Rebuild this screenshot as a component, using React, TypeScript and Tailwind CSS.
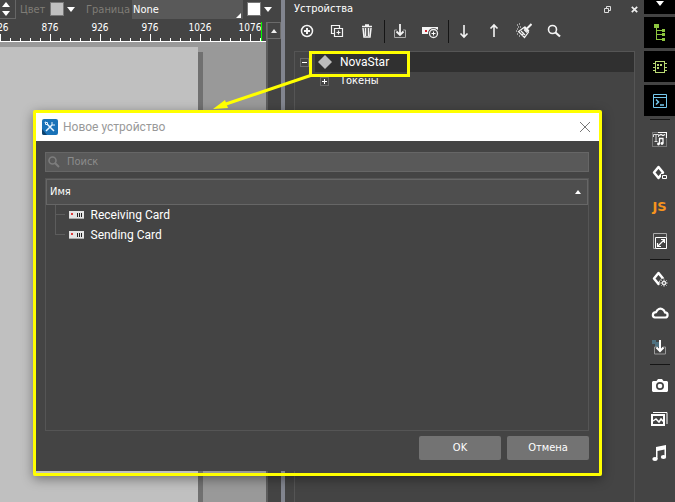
import React, { useState } from 'react';

const rulerMarks = ['826', '876', '926', '976', '1026', '1076'];
const deviceTypes = ['Receiving Card', 'Sending Card'];

const Caret: React.FC<{ up?: boolean }> = ({ up }) => (
  <svg width="8" height="5" viewBox="0 0 8 5" fill="#fff">
    <path d={up ? 'M0 5L4 0l4 5z' : 'M0 0h8L4 5z'} />
  </svg>
);

const Expander: React.FC<{ open?: boolean }> = ({ open }) => (
  <svg width="9" height="9" viewBox="0 0 9 9" fill="none" shapeRendering="crispEdges">
    <path d="M.5.5h8v8h-8z" stroke="#6a6a6a" />
    <path d={open ? 'M2 4.5h5' : 'M2 4.5h5M4.5 2v5'} stroke="#fff" />
  </svg>
);

const Icon: React.FC<{ children: React.ReactNode; size?: number }> = ({ children, size = 16 }) => (
  <svg width={size} height={size} viewBox="0 0 16 16" fill="none" stroke="#f4f4f4" strokeWidth="1.5">
    {children}
  </svg>
);

const ToolButton: React.FC<{ label: string; children: React.ReactNode }> = ({ label, children }) => (
  <button type="button" aria-label={label} className="flex h-6 w-[30px] items-center justify-center">
    {children}
  </button>
);

const SideButton: React.FC<{ label: string; dark?: boolean; children: React.ReactNode }> = ({ label, dark, children }) => (
  <button
    type="button"
    aria-label={label}
    className={dark ? 'flex h-[31px] w-full shrink-0 items-center justify-center bg-black' : 'flex h-[34px] w-full shrink-0 items-center justify-center'}
  >
    {children}
  </button>
);

const FormatBar: React.FC = () => (
  <div className="flex h-[22px] items-start overflow-hidden leading-5">
    <div className="flex h-[19px] w-4 shrink-0 flex-col items-center justify-center gap-1 border-r border-b border-[#666] pr-1">
      <button type="button" aria-label="Увеличить"><Caret up /></button>
      <button type="button" aria-label="Уменьшить"><Caret /></button>
    </div>
    <span className="w-[34px] shrink-0 pl-1 text-[#7f7c76]">Цвет</span>
    <button type="button" aria-label="Выбрать цвет" className="flex h-[18px] w-9 shrink-0 items-center gap-[3px]">
      <span className="mb-px h-[14px] w-[14px] border border-[#777] bg-[#c0c0c0]" />
      <Caret />
    </button>
    <label htmlFor="border-style" className="w-[46px] shrink-0 text-[#7f7c76]">Граница</label>
    <div className="relative h-[19px] w-[111px] shrink-0 bg-[#595959]">
      <select id="border-style" className="h-[19px] w-full appearance-none px-px leading-[19px] text-white">
        <option>None</option>
      </select>
      <svg className="pointer-events-none absolute right-0.5 bottom-px" width="5" height="5" viewBox="0 0 5 5" fill="#fff">
        <path d="M5 0v5H0z" />
      </svg>
    </div>
    <button type="button" aria-label="Цвет границы" className="ml-1 flex h-[18px] shrink-0 items-center gap-[3px]">
      <span className="mb-px h-[14px] w-[14px] border border-[#777] bg-white" />
      <Caret />
    </button>
  </div>
);

const Workspace: React.FC = () => (
  <section className="flex min-w-0 flex-1 flex-col overflow-hidden bg-[#444]">
    <FormatBar />
    <div className="flex min-h-0 flex-1">
      <div className="flex min-w-0 flex-1 flex-col overflow-hidden">
        <div className="relative h-5 shrink-0 overflow-hidden border-b border-white text-[10px] leading-3">
          <div className="-ml-[25px] flex h-3">
            {rulerMarks.map((mark) => (
              <span key={mark} className="w-[50px] shrink-0 text-center">{mark}</span>
            ))}
          </div>
          <div className="flex h-[7px] items-end">
            {Array.from({ length: 27 }, (_, i) => (
              <span key={i} className={i % 5 === 0 ? 'h-[7px] w-[10px] shrink-0 border-l border-white' : 'h-[3px] w-[10px] shrink-0 border-l border-white'} />
            ))}
          </div>
          <span className="absolute top-0 right-1 h-[19px] w-px bg-[#00ff00]" />
        </div>
        <div className="flex flex-1 bg-[#999] pt-[5px]">
          <div className="flex-1 bg-[#c0c0c0]" />
          <div className="mt-[5px] mr-[63px] w-[5px] bg-[#707070]" />
        </div>
      </div>
      <div className="w-[15px] shrink-0 border-l-2 border-[#5d5d5d]">
        <button type="button" aria-label="Прокрутить вверх" className="-ml-0.5 flex h-[17px] w-[15px] items-center justify-center border border-[#6b6b6b]">
          <svg width="6" height="4" viewBox="0 0 6 4" fill="#eee"><path d="M0 4L3 0l3 4z" /></svg>
        </button>
      </div>
    </div>
  </section>
);

const DevicesPanel: React.FC = () => (
  <section className="flex w-[359px] shrink-0 flex-col bg-[#444]">
    <header className="flex h-[18px] shrink-0 items-center pr-1.5 pl-[9px]">
      <h2 className="flex-1">Устройства</h2>
      <button type="button" aria-label="Открепить" className="mr-5">
        <svg width="7" height="7" viewBox="0 0 7 7" fill="none" stroke="#ddd"><path d="M2.5 3V.5h4v4H5M.5 2.5h4v4h-4z" /></svg>
      </button>
      <button type="button" aria-label="Закрыть панель">
        <svg width="7" height="7" viewBox="0 0 7 7" fill="none" stroke="#eee" strokeWidth="1.7"><path d="M.8.8l5.4 5.4M6.2.8L.8 6.2" /></svg>
      </button>
    </header>
    <div className="flex h-[26px] items-center pl-[7px]">
      <ToolButton label="Добавить">
        <Icon><circle cx="8" cy="8" r="5.5" /><path d="M8 5v6M5 8h6" strokeWidth="2" /></Icon>
      </ToolButton>
      <ToolButton label="Дублировать">
        <Icon><path d="M5 10.5H2.500V2.500h8V5M5.500 5.500h8v8h-8zM9.500 7.500v4M7.500 9.500h4" strokeWidth="1.200" /></Icon>
      </ToolButton>
      <ToolButton label="Удалить">
        <Icon><path d="M3 3.500h10M6 2h4M4 5l1 9h6l1-9M6.500 5v8M9.500 5v8" strokeWidth="1.500" /></Icon>
      </ToolButton>
      <span className="ml-0.5 h-[23px] w-px shrink-0 bg-[#151515]" />
      <ToolButton label="Импорт">
        <Icon><path d="M5 7H2.500v7.500h11V7H11" stroke="#aaa" strokeWidth="1" /><path d="M8 1v11M4.500 8.500L8 12l3.500-3.500" strokeWidth="1.800" /></Icon>
      </ToolButton>
      <ToolButton label="Добавить карту">
        <svg width="17" height="16" viewBox="0 0 17 16" fill="none">
          <path d="M0 4h16v7H0z" fill="#f4f4f4" /><path d="M3 7h2v2H3z" fill="#d3202c" />
          <circle cx="11.500" cy="10.500" r="5.500" fill="#444" />
          <path d="M11.500 8.500v4M9.500 10.500h4" stroke="#fff" /><circle cx="11.500" cy="10.500" r="4" stroke="#eee" strokeWidth="1.300" />
        </svg>
      </ToolButton>
      <span className="ml-[3px] h-[23px] w-px shrink-0 bg-[#151515]" />
      <ToolButton label="Вниз"><Icon><path d="M8 2v12M4.500 10.500L8 14l3.500-3.500" strokeWidth="1.600" /></Icon></ToolButton>
      <ToolButton label="Вверх"><Icon><path d="M8 14V2M4.500 5.500L8 2l3.500 3.500" strokeWidth="1.600" /></Icon></ToolButton>
      <ToolButton label="Очистить">
        <Icon>
          <path d="M15.500 1L11 5.500" strokeWidth="2" /><path d="M8.500 3.500l4.500 4.500M8 4.500L2.500 8.500l6 6L12.500 9zM5 8l4 4M8 6.500l3 3M6 12l2-2" strokeWidth="1.200" />
          <path d="M1 2h1M3 1h1M2 4h1M4 4h1M1 6h1M0 8h1M1 11h1M3 13h1" strokeWidth="1" />
        </Icon>
      </ToolButton>
      <ToolButton label="Найти"><Icon><circle cx="6.500" cy="6.500" r="4" strokeWidth="1.600" /><path d="M9.500 9.500L14 13.500" strokeWidth="2.200" /></Icon></ToolButton>
    </div>
    <ul className="mt-[7px] mr-[9px] ml-[9px] flex-1 border border-b-0 border-[#555]">
      <li className="flex h-5 items-center pl-[5px]">
        <Expander open />
        <div className="ml-1.5 flex h-5 flex-1 items-center bg-[#303030] pl-[3px]">
          <svg width="14" height="14" viewBox="0 0 14 14"><path d="M7 0l7 7-7 7-7-7z" fill="#bcbcbc" /></svg>
          <span className="ml-2 font-['Roboto',sans-serif] text-[12px]">NovaStar</span>
        </div>
      </li>
      <li className="flex h-[18px] items-center gap-[11px] pl-[25px]">
        <Expander />
        <span>Токены</span>
      </li>
    </ul>
  </section>
);

const SideDivider: React.FC = () => <span className="h-px w-5 shrink-0 bg-[#151515]" />;

const SideBar: React.FC = () => (
  <nav className="flex w-[31px] shrink-0 flex-col items-center">
    <button type="button" aria-label="Ещё" className="mb-[3px] flex h-[14px] w-full shrink-0 justify-center bg-black pt-px"><Caret /></button>
    <div className="flex w-full flex-col gap-[3px]">
      <SideButton label="Дерево" dark>
        <svg width="12" height="17" viewBox="0 0 12 17" fill="#8dc63f" shapeRendering="crispEdges">
          <path d="M0 0h5v4H0zM2 4h1v12H2zM3 6h5v1H3zM3 10h5v1H3zM3 15h5v1H3zM8 5h3v3H8zM8 9h3v3H8zM8 14h3v3H8z" />
        </svg>
      </SideButton>
      <SideButton label="Микросхема" dark>
        <svg width="14" height="12" viewBox="0 0 14 12" fill="none" stroke="#b9d873" shapeRendering="crispEdges">
          <path d="M2.500.5h9v11h-9zM0 2.500h2M0 6.500h2M0 9.500h2M12 2.500h2M12 6.500h2M12 9.500h2" />
          <path d="M4 3h2v2H4zM7 3h2v2H7zM4 6h2v2H4z" fill="#b9d873" stroke="none" />
        </svg>
      </SideButton>
      <SideButton label="Консоль" dark>
        <svg width="14" height="14" viewBox="0 0 14 14" fill="none" stroke="#75c8ee">
          <path d="M.5.5h13v13H.5zM0 3.500h14" /><path d="M3 5.500L5.500 8 3 10.500M7 11h4" strokeWidth="1.500" />
        </svg>
      </SideButton>
    </div>
    <span className="h-[3px]" />
    <SideDivider />
    <span className="h-0.5" />
    <SideButton label="Медиатекст">
      <svg width="15" height="15" viewBox="0 0 15 15" fill="none">
        <path d="M.5.5h14v14H.5z" stroke="#aaa" strokeDasharray="1 1" />
        <path d="M1.500 5V2.500h5V5M4 2.500v7M2.500 9.500h3" stroke="#ddd" />
        <path d="M6 .5h8.500V6M7 3.500l2-1 2 1 2-1" stroke="#fff" strokeWidth="1.200" />
        <path d="M7.500 12V6.500h3.500v5" stroke="#fff" strokeWidth="1.300" /><circle cx="6.500" cy="12" r="1.400" fill="#fff" /><circle cx="10" cy="11.500" r="1.400" fill="#fff" />
      </svg>
    </SideButton>
    <SideButton label="Удалить фигуру">
      <svg width="16" height="16" viewBox="0 0 16 16" fill="none" stroke="#fff">
        <path d="M6.500 2l4.500 5.500L6.500 13 2 7.500z" strokeWidth="2.500" strokeLinejoin="round" />
        <path d="M9 9h7v6H9z" fill="#444" stroke="none" /><path d="M10.500 10.500h4v3h-4z" />
      </svg>
    </SideButton>
    <button type="button" className="flex h-[34px] items-center font-['DejaVu_Sans',sans-serif] text-[13px] font-bold text-[#f7941e]">JS</button>
    <SideButton label="Масштаб">
      <svg width="14" height="16" viewBox="0 0 14 16" fill="none">
        <path d="M2 15.500H.5V.5h13V4" stroke="#aaa" /><path d="M2.500 4.500h11v11h-11z" stroke="#fff" />
        <path d="M5 13l6-6M8 6.500h3.500V10M4.500 10v3.500H8" stroke="#fff" strokeWidth="1.200" />
      </svg>
    </SideButton>
    <span className="h-px" />
    <SideDivider />
    <span className="h-0.5" />
    <SideButton label="Настройки фигуры">
      <svg width="16" height="16" viewBox="0 0 16 16" fill="none" stroke="#fff">
        <path d="M6.500 2l4.500 5.500L6.500 13 2 7.500z" strokeWidth="2.500" strokeLinejoin="round" />
        <circle cx="12" cy="12" r="4.500" fill="#444" stroke="none" />
        <circle cx="12" cy="12" r="1.500" /><path d="M12 8.500v2M12 13.500v2M8.500 12h2M13.500 12h2M9.500 9.500l1.200 1.200M13.300 13.300l1.200 1.200M14.500 9.500l-1.200 1.200M10.700 13.300l-1.200 1.200" />
      </svg>
    </SideButton>
    <SideButton label="Облако">
      <svg width="18" height="12" viewBox="0 0 18 12" fill="none" stroke="#fff" strokeWidth="2.200">
        <path d="M4 10.500h10a2.500 2.500 0 0 0 0-5.200C13 2.500 9.500 0 6.500 3L5 5.200C1 5.500 1 10 4 10.500z" />
      </svg>
    </SideButton>
    <SideButton label="Загрузить">
      <svg width="15" height="16" viewBox="0 0 15 16" fill="none">
        <path d="M0 1h4v2h3v5H3V5H0z" fill="#4f7180" /><path d="M5 8H2.500v7h11V8H11" stroke="#999" />
        <path d="M8 1v11M4.500 8.500L8 12l3.500-3.500" stroke="#fff" strokeWidth="2" />
      </svg>
    </SideButton>
    <SideDivider />
    <span className="h-[3px]" />
    <SideButton label="Снимок">
      <svg width="16" height="13" viewBox="0 0 16 13" fill="#fff">
        <path fillRule="evenodd" d="M1 2h3.500L6 0h4l1.500 2H15l1 1v9l-1 1H1l-1-1V3zM8 3a4 4 0 1 0 0 8 4 4 0 0 0 0-8z" /><circle cx="8" cy="7" r="2.300" />
      </svg>
    </SideButton>
    <SideButton label="Изображения">
      <svg width="17" height="14" viewBox="0 0 17 14" fill="none" stroke="#fff">
        <path d="M2 .5h14V12" /><path d="M1 3h12v10H1z" strokeWidth="2" /><path d="M2 9l3-2 3 3 2-3 3 3" strokeWidth="1.500" />
      </svg>
    </SideButton>
    <SideButton label="Музыка">
      <svg width="15" height="16" viewBox="0 0 15 16" fill="#fff">
        <path d="M4 2l10-2v12h-1.500V4.500L5.500 6v8H4z" /><ellipse cx="3" cy="14" rx="2.700" ry="2" /><ellipse cx="11.500" cy="12" rx="2.700" ry="2" />
      </svg>
    </SideButton>
  </nav>
);

const NewDeviceDialog: React.FC = () => {
  const [query, setQuery] = useState('');

  return (
    <div role="dialog" aria-labelledby="dialog-title" className="absolute top-[110px] right-[73px] left-[33px] rounded-xs border-3 border-[#ffff00] pb-0.5 shadow-[0_3px_12px_rgba(0,0,0,0.4)]">
      <header className="flex h-7 items-center bg-white pr-[9px] pl-1.5">
        <svg width="16" height="16" viewBox="0 0 16 16" fill="none">
          <rect width="16" height="16" rx="2" fill="#1972b8" />
          <path d="M0 10l5 6H2a2 2 0 0 1-2-2z" fill="#0d416c" />
          <path d="M4 12l6-6M5 5l7 7" stroke="#eaf5ff" strokeWidth="1.500" />
          <path d="M3 3l3 1-2 2zM10 3v3h3" stroke="#eaf5ff" />
        </svg>
        <h1 id="dialog-title" className="ml-[5px] flex-1 font-['Roboto',sans-serif] text-[12px] text-[#999]">Новое устройство</h1>
        <button type="button" aria-label="Закрыть">
          <svg width="10" height="10" viewBox="0 0 10 10" stroke="#777"><path d="M0 0l10 10M10 0L0 10" /></svg>
        </button>
      </header>
      <div className="bg-[#444] pt-[11px] pr-[10px] pb-[11px] pl-[9px]">
        <label className="flex h-5 items-center border border-[#666] bg-[#595959] pl-0.5">
          <svg width="12" height="12" viewBox="0 0 12 12" fill="none" stroke="#7d7d7d" strokeWidth="1.600">
            <circle cx="4.500" cy="4.500" r="3.500" /><path d="M7 7l4 4" strokeWidth="2" />
          </svg>
          <input
            type="text"
            aria-label="Поиск"
            placeholder="Поиск"
            value={query}
            onChange={(e) => setQuery(e.target.value)}
            className="ml-[7px] min-w-0 flex-1 text-white outline-none placeholder:text-[#8c8c8c]"
          />
        </label>
        <div className="mt-1.5 h-[253px] border border-[#555]">
          <table className="w-full border-collapse">
            <thead>
              <tr>
                <th className="h-[25px] border border-[#666] bg-[#4e4e4e] p-0 font-normal">
                  <button type="button" className="flex w-full items-center justify-between pr-1.5 pl-[3px]">
                    Имя
                    <svg width="6" height="4" viewBox="0 0 6 4" fill="#fff"><path d="M0 4L3 0l3 4z" /></svg>
                  </button>
                </th>
              </tr>
            </thead>
            <tbody className="font-['Roboto',sans-serif] text-[12px]">
              {deviceTypes.map((name, i) => (
                <tr key={name}>
                  <td className="h-5 p-0">
                    <div className="flex h-5 items-center pl-2">
                      <svg width="10" height="20" viewBox="0 0 10 20" fill="none" stroke="#5c5c5c" shapeRendering="crispEdges">
                        <path d={i === deviceTypes.length - 1 ? 'M.5 0v9.500H10' : 'M.5 0v20M.5 9.500H10'} />
                      </svg>
                      <svg className="ml-[4px]" width="15" height="8" viewBox="0 0 15 8" shapeRendering="crispEdges">
                        <path d="M0 0h15v8H0z" fill="#e4e4e4" /><path d="M0 7h15v1H0z" fill="#aaa" />
                        <path d="M2 2h2v2H2z" fill="#e03c3c" /><path d="M8 2h1v4H8zM10 2h1v4h-1zM12 2h1v4h-1z" fill="#222" />
                      </svg>
                      <span className="ml-[7px]">{name}</span>
                    </div>
                  </td>
                </tr>
              ))}
            </tbody>
          </table>
        </div>
        <footer className="mt-[5px] flex justify-end gap-1.5">
          <button type="button" className="h-6 w-[82px] rounded-xs bg-[#737373]">OK</button>
          <button type="button" className="h-6 w-[82px] rounded-xs bg-[#737373]">Отмена</button>
        </footer>
      </div>
    </div>
  );
};

// highlight frame around the tree node and the arrow to the dialog
const Callout: React.FC = () => (
  <svg className="pointer-events-none absolute top-0 right-0" width="475" height="120" viewBox="0 0 475 120" fill="none">
    <rect x="110.5" y="52.5" width="98" height="23" stroke="#ffff00" strokeWidth="3" />
    <path d="M112 75L26 104" stroke="#ffff00" strokeWidth="3" />
    <path d="M13 109l12-9 3 8z" fill="#ffff00" />
  </svg>
);

const App: React.FC = () => {
  return (
    <main className="relative flex h-screen overflow-hidden bg-[#444] font-['DejaVu_Sans_Condensed','Open_Sans',sans-serif] text-[11px] text-white">
      <Workspace />
      <div className="w-1 shrink-0 bg-[#82858f]" />
      <DevicesPanel />
      <SideBar />
      <NewDeviceDialog />
      <Callout />
    </main>
  );
};

export default App;
